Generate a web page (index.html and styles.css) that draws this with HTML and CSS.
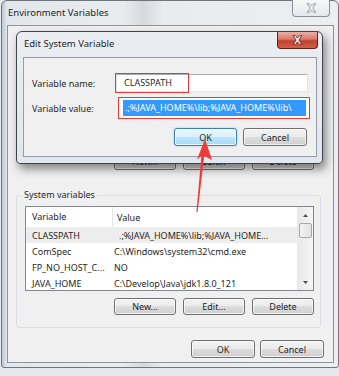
FILE: index.html
```html
<!DOCTYPE html>
<html lang="en">
<head>
    <meta charset="UTF-8">
    <title>Environment Variables</title>
    <link rel="stylesheet" href="styles.css">
</head>
<body>
    <div class="win">
        <div class="titlebar">
            <span class="title">Environment Variables</span>
            <span class="close-btn">
                <svg width="11" height="10" viewBox="0 0 10 9"><polygon points="1,0.5 3,0.5 5,2.8 7,0.5 9,0.5 6.2,4.5 9,8.5 7,8.5 5,6.2 3,8.5 1,8.5 3.8,4.5" fill="#f7f7f7" stroke="#8c9096" stroke-width="0.8"/></svg>
            </span>
        </div>
        <div class="client">
            <div class="btn-row user-btns">
                <button class="btn">New...</button>
                <button class="btn">Edit...</button>
                <button class="btn">Delete</button>
            </div>

            <fieldset class="group">
                <legend>System variables</legend>
                <div class="list">
                    <div class="list-body">
                        <div class="list-row list-head">
                            <span class="col-name">Variable</span>
                            <span class="col-value">Value</span>
                        </div>
                        <div class="list-row selected">
                            <span class="col-name">CLASSPATH</span>
                            <span class="col-value indent">.;%JAVA_HOME%\lib;%JAVA_HOME...</span>
                        </div>
                        <div class="list-row">
                            <span class="col-name">ComSpec</span>
                            <span class="col-value">C:\Windows\system32\cmd.exe</span>
                        </div>
                        <div class="list-row">
                            <span class="col-name">FP_NO_HOST_C...</span>
                            <span class="col-value">NO</span>
                        </div>
                        <div class="list-row">
                            <span class="col-name">JAVA_HOME</span>
                            <span class="col-value">C:\Develop\Java\jdk1.8.0_121</span>
                        </div>
                    </div>
                    <div class="scrollbar">
                        <span class="sb-arrow"><svg width="5" height="3" viewBox="0 0 5 3"><polygon points="0,3 2.5,0 5,3" fill="#4d4d4d"/></svg></span>
                        <span class="sb-thumb"></span>
                        <span class="sb-track"></span>
                        <span class="sb-arrow"><svg width="5" height="3" viewBox="0 0 5 3"><polygon points="0,0 2.5,3 5,0" fill="#4d4d4d"/></svg></span>
                    </div>
                </div>
                <div class="btn-row group-btns">
                    <button class="btn">New...</button>
                    <button class="btn">Edit...</button>
                    <button class="btn">Delete</button>
                </div>
            </fieldset>

            <div class="btn-row footer">
                <button class="btn wide">OK</button>
                <button class="btn wide">Cancel</button>
            </div>
        </div>

        <div class="dialog">
            <div class="titlebar dlg-titlebar">
                <span class="title dlg-title">Edit System Variable</span>
                <span class="close-btn red">
                    <svg width="11" height="10" viewBox="0 0 10 9"><polygon points="1,0.5 3,0.5 5,2.8 7,0.5 9,0.5 6.2,4.5 9,8.5 7,8.5 5,6.2 3,8.5 1,8.5 3.8,4.5" fill="#ffffff" stroke="#5a2a22" stroke-width="0.8"/></svg>
                </span>
            </div>
            <div class="dlg-client">
                <div class="form">
                    <label class="field-label">Variable name:</label>
                    <div class="textbox">
                        <span class="mark-name"></span>
                        CLASSPATH
                    </div>
                    <label class="field-label">Variable value:</label>
                    <div class="mark-value">
                        <span class="selection">.;%JAVA_HOME%\lib;%JAVA_HOME%\lib\</span>
                    </div>
                </div>
                <div class="btn-row dlg-btns">
                    <button class="btn default">OK</button>
                    <button class="btn cancel">Cancel</button>
                </div>
            </div>
        </div>
    </div>

    <svg class="arrow" width="339" height="376" viewBox="0 0 339 376">
        <path d="M205,139 L212,160 L204.2,156 L197.6,212 L196.4,212 L201.4,156 L197,159.5 Z" fill="#ee3b3b"/>
    </svg>
</body>
</html>
```

FILE: styles.css
```css
* {
    box-sizing: border-box;
}
body {
    position: relative;
    margin: 0;
    width: 339px;
    height: 376px;
    overflow: hidden;
    background: #e6e8ea;
    font-family: "Noto Sans", "Liberation Sans", sans-serif;
    font-size: 9px;
    color: #262626;
}
.win {
    position: relative;
    margin-left: 1px;
    width: 338px;
    height: 368px;
    border: 1px solid #6f757c;
    border-radius: 6px 6px 3px 3px;
    padding: 0 4px 4px 5px;
    background: linear-gradient(90deg, #b9c8d8 0, #e2e7ec 5px, #e9ecef 36%, #d5d9dd 42%, #e9ecef 48%, #eceef1 100%);
}
.titlebar {
    display: flex;
    justify-content: space-between;
    align-items: flex-start;
    height: 24px;
}
.title {
    padding: 5px 0 0 1px;
    font-size: 9.5px;
    line-height: 14px;
    color: #1e1e1e;
}
.close-btn {
    display: flex;
    align-items: center;
    justify-content: center;
    width: 38px;
    height: 17px;
    margin: -1px 4px 0 0;
    border: 1px solid #8a9098;
    border-top: none;
    border-radius: 0 0 4px 4px;
    background: linear-gradient(#f7f8fa, #e4e7eb);
}
.client {
    display: flex;
    flex-direction: column;
    width: 327px;
    height: 338px;
    border: 1px solid #8d949c;
    background: #f0f0f0;
}
.btn-row {
    display: flex;
    justify-content: flex-end;
    gap: 7px;
}
.btn {
    width: 62px;
    height: 17px;
    padding: 0;
    border: 1px solid #707070;
    border-radius: 3px;
    background: linear-gradient(#f2f2f2, #ebebeb 50%, #dddddd 50%, #cfcfcf);
    box-shadow: inset 0 0 0 1px rgba(255, 255, 255, 0.7);
    font-family: inherit;
    font-size: 9px;
    color: #262626;
}
.user-btns {
    margin: 127px 19px 0 0;
}
.group {
    margin: 19px 12px 0 8px;
    padding: 5px 6px 12px 8px;
    min-width: 0;
    border: 1px solid #d5dfe5;
    border-radius: 3px;
}
.group legend {
    margin-left: -3px;
    padding: 0 2px;
    line-height: 12px;
}
.list {
    display: flex;
    height: 85px;
    border: 1px solid #828790;
    background: #fff;
    overflow: hidden;
}
.list-body {
    flex: 1;
}
.list-row {
    display: grid;
    grid-template-columns: 87px 1fr;
    height: 16px;
    align-items: center;
    white-space: nowrap;
}
.list-head {
    height: 20px;
}
.col-name {
    padding-left: 6px;
}
.col-value {
    padding-left: 1px;
    overflow: hidden;
}
.list-head .col-name {
    border-right: 1px solid #e5e5e5;
    line-height: 20px;
}
.list-head .col-value {
    padding-left: 4px;
}
.col-value.indent {
    padding-left: 6px;
}
.selected {
    background: #ededed;
}
.scrollbar {
    display: flex;
    flex-direction: column;
    align-items: center;
    width: 16px;
    background: linear-gradient(90deg, #e9e9e9, #f5f5f5);
}
.sb-arrow {
    display: flex;
    align-items: center;
    justify-content: center;
    height: 16px;
}
.sb-thumb {
    width: 13px;
    height: 15px;
    border: 1px solid #a7a7a7;
    border-radius: 2px;
    background: linear-gradient(90deg, #f3f3f3, #e2e2e2);
}
.sb-track {
    flex: 1;
}
.group-btns {
    margin-top: 7px;
}
.footer {
    margin: 12px 9px 0 0;
    gap: 5px;
}
.btn.wide {
    width: 64px;
    height: 18px;
}

/* edit dialog on top */
.dialog {
    position: absolute;
    left: 14px;
    top: 30px;
    display: flex;
    flex-direction: column;
    width: 307px;
    height: 133px;
    padding: 0 5px 6px 6px;
    border: 1px solid #3e444b;
    border-radius: 6px 6px 4px 4px;
    background: linear-gradient(#eaeef3, #e2e7ed);
    box-shadow: 3px 5px 10px rgba(0, 0, 0, 0.45);
}
.dlg-titlebar {
    height: 25px;
}
.dlg-title {
    font-size: 9.5px;
}
.close-btn.red {
    width: 41px;
    margin: 0 -1px 0 0;
    border-color: #5a231b;
    background: linear-gradient(#eab0a6, #d8796c 45%, #c2412d 55%, #d25f49);
}
.dlg-client {
    flex: 1;
    padding: 16px 8px 0 8px;
    border: 1px solid #959ca5;
    background: #f0f0f0;
}
.form {
    display: grid;
    grid-template-columns: 84px 192px;
    row-gap: 5px;
    align-items: center;
}
.textbox {
    position: relative;
    height: 18px;
    padding-left: 7px;
    border: 1px solid #abadb3;
    border-color: #abadb3 #e2e3ea #e3e9ef #e2e3ea;
    background: #fff;
    line-height: 16px;
}
.mark-name {
    position: absolute;
    left: -2px;
    top: -2px;
    width: 74px;
    height: 20px;
    border: 1px solid #e53935;
}
.mark-value {
    display: flex;
    width: 192px;
    height: 22px;
    margin-left: 2px;
    padding: 2px 3px 2px 4px;
    border: 1px solid #e53935;
    background: #fff;
}
.selection {
    flex: 1;
    overflow: hidden;
    padding-left: 2px;
    background: #3399ff;
    color: #fff;
    line-height: 16px;
    white-space: nowrap;
}
.dlg-btns {
    margin: 9px 1px 0 0;
    gap: 6px;
}
.btn.default {
    width: 63px;
    height: 18px;
    border-color: #3c7fb1;
    background: linear-gradient(#eaf6fd, #d9f0fc 50%, #bee6fd 50%, #a7d9f5);
    box-shadow: inset 0 0 0 1px rgba(255, 255, 255, 0.8), 0 0 2px #7fc4ee;
}
.btn.cancel {
    width: 64px;
    height: 18px;
}
.arrow {
    position: absolute;
    left: 0;
    top: 0;
    pointer-events: none;
}
```
